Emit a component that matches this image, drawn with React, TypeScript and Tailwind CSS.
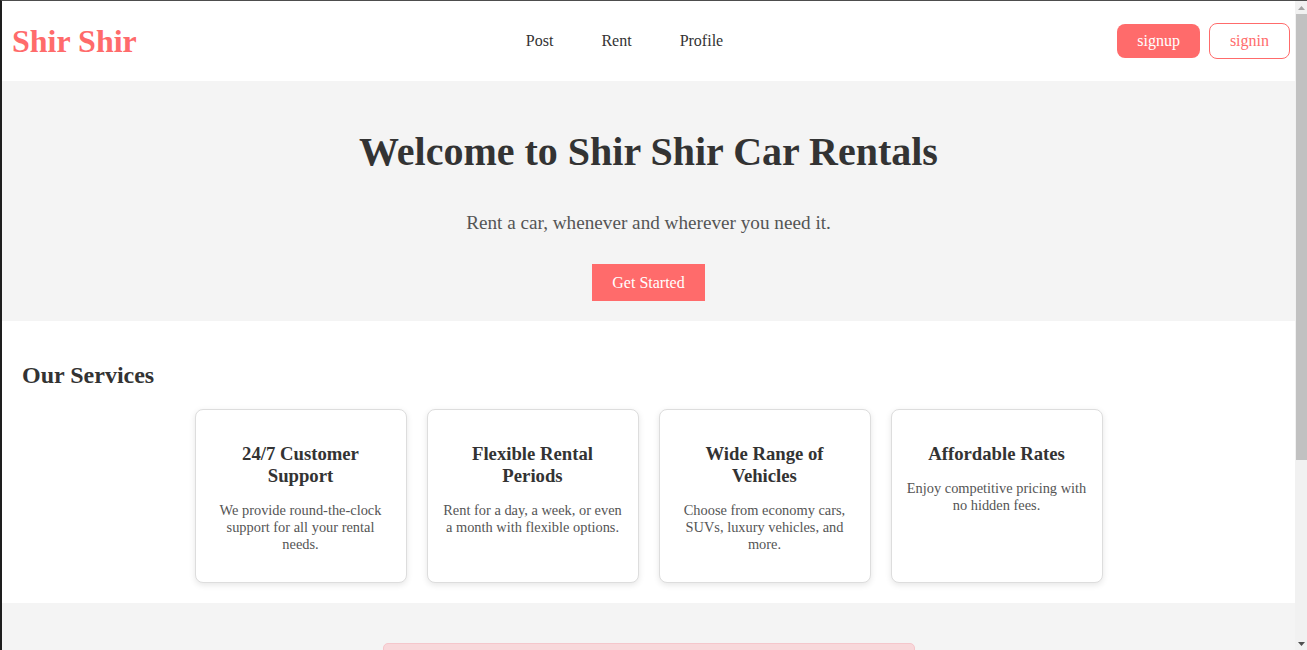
import React from "react";

const services = [
  {
    title: "24/7 Customer Support",
    text: "We provide round-the-clock support for all your rental needs.",
  },
  {
    title: "Flexible Rental Periods",
    text: "Rent for a day, a week, or even a month with flexible options.",
  },
  {
    title: "Wide Range of Vehicles",
    text: "Choose from economy cars, SUVs, luxury vehicles, and more.",
  },
  {
    title: "Affordable Rates",
    text: "Enjoy competitive pricing with no hidden fees.",
  },
];

function Scrollbar() {
  return (
    <div className="w-[12px] shrink-0 h-full bg-[#f1f1f1] flex flex-col items-stretch">
      <div className="h-[13px] flex items-center justify-center">
        <svg width="7" height="4" viewBox="0 0 7 4">
          <polygon points="0,4 7,4 3.5,0" fill="#a3a3a3" />
        </svg>
      </div>
      <div className="h-[446px] ml-[1px] bg-[#c1c1c1]" />
      <div className="flex-1" />
      <div className="h-[13px] flex items-center justify-center">
        <svg width="7" height="4" viewBox="0 0 7 4">
          <polygon points="0,0 7,0 3.5,4" fill="#505050" />
        </svg>
      </div>
    </div>
  );
}

export default function App() {
  return (
    <div
      className="h-[650px] w-full flex flex-row border-t border-t-[#4d4d4d] border-l-2 border-l-[#1e1e1e] bg-white text-[#333] overflow-hidden"
      style={{ fontFamily: '"Liberation Serif", "Times New Roman", serif' }}
    >
      <div className="flex-1 min-w-0 h-full overflow-hidden">
        {/* Header */}
        <header className="h-[80px] flex items-center justify-between pl-[10px] pr-[5px] bg-white">
          <div className="text-[32px] leading-[37px] font-bold text-[#ff6b6b]">Shir Shir</div>
          <nav className="flex items-center gap-[48px] pr-[5px] text-[16px] text-[#333]">
            <a className="cursor-pointer">Post</a>
            <a className="cursor-pointer">Rent</a>
            <a className="cursor-pointer">Profile</a>
          </nav>
          <div className="flex items-center gap-[9px]">
            <button className="bg-[#ff6b6b] text-white text-[16px] leading-[18px] px-[20px] py-[8px] rounded-[8px]">
              signup
            </button>
            <button className="bg-white text-[#ff6b6b] text-[16px] leading-[18px] px-[20px] py-[8px] rounded-[8px] border border-[#ff6b6b]">
              signin
            </button>
          </div>
        </header>

        {/* Hero */}
        <section className="bg-[#f4f4f4] pt-[48px] pb-[20px] px-[20px] flex flex-col items-center text-center">
          <h1 className="text-[40px] leading-[46px] font-bold text-[#333]">
            Welcome to Shir Shir Car Rentals
          </h1>
          <p className="mt-[37px] text-[19.2px] leading-[22px] text-[#555]">
            Rent a car, whenever and wherever you need it.
          </p>
          <button className="mt-[30px] bg-[#ff6b6b] text-white text-[16px] leading-[17px] px-[20px] py-[10px]">
            Get Started
          </button>
        </section>

        {/* Services */}
        <section className="bg-white px-[20px] pt-[40px] pb-[20px]">
          <h2 className="text-[24px] leading-[28px] font-bold text-[#333]">Our Services</h2>
          <div className="mt-[20px] flex justify-center gap-[20px]">
            {services.map((s) => (
              <div
                key={s.title}
                className="w-[212px] bg-white border border-[#dddddd] rounded-[8px] p-[15px] text-center shadow-[0_2px_6px_rgba(0,0,0,0.1)]"
              >
                <h3 className="mt-[18px] text-[18.72px] leading-[22px] font-bold text-[#333]">
                  {s.title}
                </h3>
                <p className="mt-[15px] mb-[14px] text-[14.4px] leading-[17px] text-[#555]">{s.text}</p>
              </div>
            ))}
          </div>
        </section>

        {/* Notice */}
        <section className="bg-[#f4f4f4] pt-[40px] pb-[40px] flex justify-center">
          <div className="w-[532px] bg-[#f8d7da] border border-[#f5c6cb] rounded-[5px] px-[20px] py-[15px] text-center text-[#721c24] text-[16px]">
            Please sign in to post or rent a car.
          </div>
        </section>
      </div>
      <Scrollbar />
    </div>
  );
}
